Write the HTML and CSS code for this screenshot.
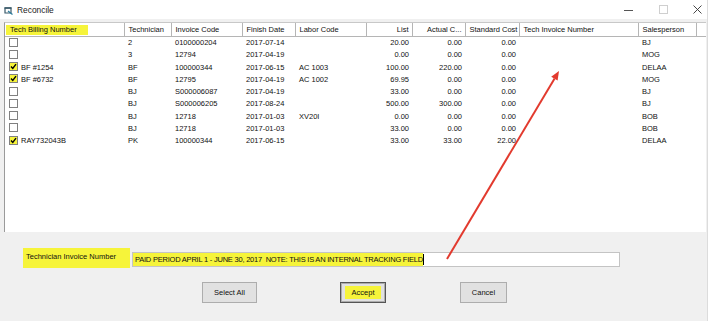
FILE: index.html
```html
<!DOCTYPE html>
<html>
<head>
<meta charset="utf-8">
<link rel="stylesheet" href="styles.css">
</head>
<body>
<div class="window">
  <div class="titlebar">
    <svg class="appicon" width="9" height="9" viewBox="0 0 9 9"><path d="M1 2 H7 V7 H1 Z" fill="none" stroke="#3a5a6a" stroke-width="1.2"/><path d="M0.5 2 H7.5" stroke="#3a5a6a" stroke-width="1.6"/><path d="M4 5 L8.5 8.5" stroke="#2a7a9a" stroke-width="1.2"/></svg>
    <span class="title">Reconcile</span>
    <div class="winctl">
      <span class="ctl min"></span>
      <span class="ctl max"></span>
      <svg class="ctl close" width="9" height="9" viewBox="0 0 9 9"><path d="M0.5 0.5 L8.5 8.5 M8.5 0.5 L0.5 8.5" stroke="#333" stroke-width="0.9"/></svg>
    </div>
  </div>
  <div class="content">
    <div class="list">
      <table class="grid">
        <colgroup>
          <col class="w1"><col class="w2"><col class="w3"><col class="w4"><col class="w5"><col class="w6"><col class="w7"><col class="w8"><col class="w9"><col class="w10"><col>
        </colgroup>
        <thead>
          <tr>
            <th class="first"><span class="hl">Tech Billing Number</span></th>
            <th>Technician</th>
            <th>Invoice Code</th>
            <th>Finish Date</th>
            <th>Labor Code</th>
            <th class="num">List</th>
            <th class="num">Actual C...</th>
            <th class="num">Standard Cost</th>
            <th>Tech Invoice Number</th>
            <th>Salesperson</th>
            <th></th>
          </tr>
        </thead>
        <tbody>
          <tr><td class="first"><span class="cb"></span></td><td>2</td><td>0100000204</td><td>2017-07-14</td><td></td><td class="num">20.00</td><td class="num">0.00</td><td class="num">0.00</td><td></td><td>BJ</td><td></td></tr>
          <tr><td class="first"><span class="cb"></span></td><td>3</td><td>12794</td><td>2017-04-19</td><td></td><td class="num">0.00</td><td class="num">0.00</td><td class="num">0.00</td><td></td><td>MOG</td><td></td></tr>
          <tr><td class="first"><span class="cb on"><svg width="7" height="7" viewBox="0 0 7 7"><path d="M1 3.5 L2.8 5.5 L6 1.2" fill="none" stroke="#000" stroke-width="1.4"/></svg></span>BF #1254</td><td>BF</td><td>100000344</td><td>2017-06-15</td><td>AC 1003</td><td class="num">100.00</td><td class="num">220.00</td><td class="num">0.00</td><td></td><td>DELAA</td><td></td></tr>
          <tr><td class="first"><span class="cb on"><svg width="7" height="7" viewBox="0 0 7 7"><path d="M1 3.5 L2.8 5.5 L6 1.2" fill="none" stroke="#000" stroke-width="1.4"/></svg></span>BF #6732</td><td>BF</td><td>12795</td><td>2017-04-19</td><td>AC 1002</td><td class="num">69.95</td><td class="num">0.00</td><td class="num">0.00</td><td></td><td>MOG</td><td></td></tr>
          <tr><td class="first"><span class="cb"></span></td><td>BJ</td><td>S000006087</td><td>2017-04-19</td><td></td><td class="num">33.00</td><td class="num">0.00</td><td class="num">0.00</td><td></td><td>BJ</td><td></td></tr>
          <tr><td class="first"><span class="cb"></span></td><td>BJ</td><td>S000006205</td><td>2017-08-24</td><td></td><td class="num">500.00</td><td class="num">300.00</td><td class="num">0.00</td><td></td><td>BJ</td><td></td></tr>
          <tr><td class="first"><span class="cb"></span></td><td>BJ</td><td>12718</td><td>2017-01-03</td><td>XV20I</td><td class="num">0.00</td><td class="num">0.00</td><td class="num">0.00</td><td></td><td>BOB</td><td></td></tr>
          <tr><td class="first"><span class="cb"></span></td><td>BJ</td><td>12718</td><td>2017-01-03</td><td></td><td class="num">33.00</td><td class="num">0.00</td><td class="num">0.00</td><td></td><td>BOB</td><td></td></tr>
          <tr><td class="first"><span class="cb on"><svg width="7" height="7" viewBox="0 0 7 7"><path d="M1 3.5 L2.8 5.5 L6 1.2" fill="none" stroke="#000" stroke-width="1.4"/></svg></span>RAY732043B</td><td>PK</td><td>100000344</td><td>2017-06-15</td><td></td><td class="num">33.00</td><td class="num">33.00</td><td class="num">22.00</td><td></td><td>DELAA</td><td></td></tr>
        </tbody>
      </table>
    </div>
    <div class="fieldrow">
      <div class="label">Technician Invoice Number</div>
      <div class="textbox"><span class="hl">PAID PERIOD APRIL 1 - JUNE 30, 2017&nbsp; NOTE: THIS IS AN INTERNAL TRACKING FIELD</span><span class="caret"></span></div>
    </div>
    <div class="buttons">
      <button class="btn b-select">Select All</button>
      <button class="btn b-accept"><span class="hl">Accept</span></button>
      <button class="btn b-cancel">Cancel</button>
    </div>
  </div>
</div>
<svg class="arrow" width="712" height="321" viewBox="0 0 712 321">
  <line x1="447" y1="259" x2="554.6" y2="78.4" stroke="#e23a2e" stroke-width="2"/>
  <polygon points="559,71 557.6,80.6 551.2,76.8" fill="#e23a2e"/>
</svg>
</body>
</html>
```

FILE: styles.css
```css
html, body {
  margin: 0;
  padding: 0;
}
body {
  width: 712px;
  height: 321px;
  background: #ffffff;
  font-family: "Liberation Sans", Arial, sans-serif;
  color: #111;
  position: relative;
  overflow: hidden;
}
.window {
  width: 707px;
  height: 321px;
  background: #f0f0f0;
  border-right: 1px solid #dcdcdc;
  display: flex;
  flex-direction: column;
}
.titlebar {
  height: 19px;
  background: #ffffff;
  display: flex;
  align-items: center;
  padding-left: 4px;
  flex-shrink: 0;
}
.appicon {
  margin-top: 1px;
}
.title {
  font-size: 8.4px;
  color: #222;
  margin-left: 4px;
  margin-top: 1px;
}
.winctl {
  margin-left: auto;
  display: flex;
  align-items: center;
  height: 19px;
}
.ctl {
  display: block;
}
.min {
  width: 9px;
  height: 1px;
  background: #555;
  margin-right: 26px;
  margin-top: 2px;
}
.max {
  width: 7px;
  height: 7px;
  border: 1px solid #cfcfcf;
  margin-right: 25px;
}
.close {
  margin-right: 5px;
}
.content {
  padding: 3px 1px 0 4px;
  display: flex;
  flex-direction: column;
}
.list {
  height: 209px;
  background: #ffffff;
  border-left: 1px solid #9a9a9a;
  border-top: 1px solid #c8c8c8;
  overflow: hidden;
}
.grid {
  border-collapse: collapse;
  table-layout: fixed;
  width: 701px;
  font-size: 7.5px;
}
.w1 { width: 119px; }
.w2 { width: 47px; }
.w3 { width: 71px; }
.w4 { width: 53px; }
.w5 { width: 71px; }
.w6 { width: 46px; }
.w7 { width: 53px; }
.w8 { width: 54px; }
.w9 { width: 119px; }
.w10 { width: 58px; }
.grid th {
  height: 13px;
  font-weight: normal;
  text-align: left;
  padding: 0 2px 0 4px;
  border-right: 1px solid #b5b5b5;
  border-bottom: 1px solid #b5b5b5;
  white-space: nowrap;
  overflow: hidden;
  color: #111;
}
.grid th:last-child {
  border-right: none;
}
.grid th.first {
  padding-left: 1px;
}
.grid td {
  height: 12.25px;
  padding: 0 2px 0 4px;
  white-space: nowrap;
  overflow: hidden;
  line-height: 12px;
}
.grid td.first {
  padding-left: 4px;
}
.grid .num {
  text-align: right;
  padding-right: 3px;
}
.hl {
  background: #f6f43a;
}
.grid th .hl {
  display: inline-block;
  padding: 1px 11px 1px 4px;
  line-height: 8px;
}
.cb {
  display: inline-block;
  width: 7px;
  height: 7px;
  border: 1px solid #808080;
  background: #ffffff;
  vertical-align: middle;
  margin-right: 3px;
  margin-top: -2px;
  position: relative;
}
.cb.on {
  background: #f6f43a;
}
.cb svg {
  display: block;
}
.fieldrow {
  display: flex;
  align-items: flex-start;
  margin-top: 16px;
  margin-left: 19px;
}
.label {
  background: #f6f43a;
  width: 104px;
  height: 20px;
  padding-left: 3px;
  font-size: 7.5px;
  line-height: 18px;
  color: #111;
}
.textbox {
  margin-left: 2px;
  margin-top: 4px;
  width: 486px;
  height: 13px;
  background: #ffffff;
  border: 1px solid #c4c4c4;
  font-size: 7.5px;
  line-height: 13px;
  white-space: nowrap;
  overflow: hidden;
  display: flex;
  align-items: stretch;
}
.textbox .hl {
  padding-left: 2px;
  letter-spacing: -0.22px;
}
.caret {
  width: 1px;
  background: #000;
  margin: 1px 0;
}
.buttons {
  display: flex;
  margin-top: 14px;
}
.btn {
  font-family: "Liberation Sans", Arial, sans-serif;
  font-size: 7.5px;
  color: #111;
  height: 21px;
  background: #e1e1e1;
  border: 1px solid #adadad;
  padding: 0;
  display: flex;
  align-items: center;
  justify-content: center;
}
.b-select {
  width: 55px;
  margin-left: 198px;
}
.b-accept {
  width: 46px;
  margin-left: 83px;
  border: 1px solid #555;
  box-shadow: inset 0 0 0 1px #adadad;
}
.b-accept .hl {
  display: block;
  width: 36px;
  height: 13px;
  line-height: 13px;
}
.b-cancel {
  width: 47px;
  margin-left: 74px;
}
.arrow {
  position: absolute;
  left: 0;
  top: 0;
  pointer-events: none;
}
```
